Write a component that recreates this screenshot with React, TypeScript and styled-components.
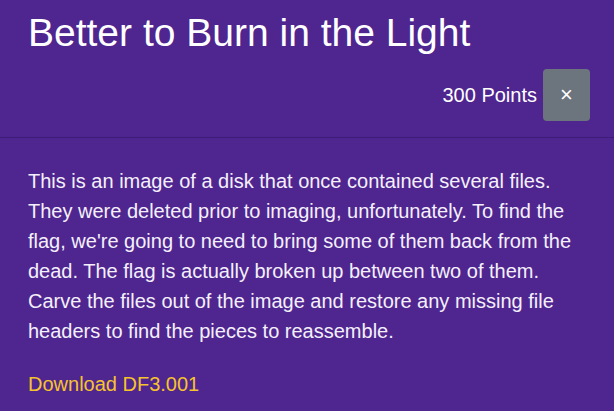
import React from "react";
import styled, { createGlobalStyle } from "styled-components";

const Global = createGlobalStyle`
  html, body {
    margin: 0;
    padding: 0;
    background: #4f2590;
  }
  body {
    font-family: "Liberation Sans", Arial, sans-serif;
    color: #ffffff;
  }
`;

const Modal = styled.div`
  width: 614px;
  min-height: 411px;
  background: #4f2590;
  display: flex;
  flex-direction: column;
`;

const Header = styled.header`
  display: flex;
  flex-direction: column;
  padding: 9px 24px 16px 28px;
  border-bottom: 1px solid #3f1c77;
`;

const Title = styled.h1`
  margin: 0;
  font-size: 39px;
  font-weight: 400;
  line-height: 48px;
  color: #ffffff;
`;

const PointsRow = styled.div`
  display: flex;
  justify-content: flex-end;
  align-items: center;
  gap: 6px;
  margin-top: 12px;
`;

const Points = styled.span`
  font-size: 20px;
  line-height: 30px;
`;

const CloseButton = styled.button`
  width: 47px;
  height: 52px;
  border: none;
  border-radius: 4px;
  background: #6c757d;
  color: #ffffff;
  font-family: "Liberation Sans", Arial, sans-serif;
  font-size: 22px;
  line-height: 1;
  display: flex;
  align-items: center;
  justify-content: center;
  padding: 0;
  cursor: pointer;
`;

const Body = styled.section`
  padding: 28px 28px 0 28px;
`;

const Description = styled.p`
  margin: 0 0 23px 0;
  font-size: 20px;
  line-height: 30px;
  color: #f4f0fa;
`;

const DownloadLink = styled.a`
  font-size: 20px;
  line-height: 30px;
  color: #f6c32c;
  text-decoration: none;
`;

export default function App() {
  return (
    <>
      <Global />
      <Modal>
        <Header>
          <Title>Better to Burn in the Light</Title>
          <PointsRow>
            <Points>300 Points</Points>
            <CloseButton aria-label="Close">×</CloseButton>
          </PointsRow>
        </Header>
        <Body>
          <Description>
            This is an image of a disk that once contained several files. They
            were deleted prior to imaging, unfortunately. To find the flag,
            we're going to need to bring some of them back from the dead. The
            flag is actually broken up between two of them. Carve the files out
            of the image and restore any missing file headers to find the
            pieces to reassemble.
          </Description>
          <DownloadLink href="#">Download DF3.001</DownloadLink>
        </Body>
      </Modal>
    </>
  );
}
